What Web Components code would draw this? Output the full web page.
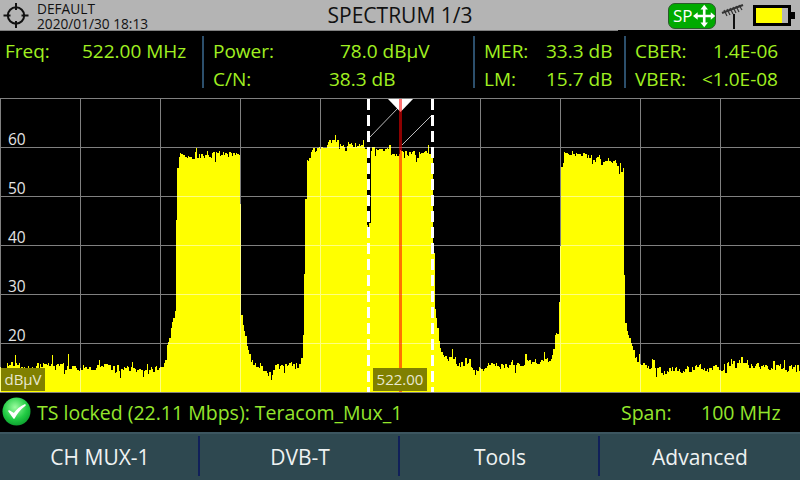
<!DOCTYPE html>
<html><head><meta charset="utf-8">
<style>
html,body{margin:0;padding:0;background:#000}
body{width:800px;height:480px;overflow:hidden;display:flex;flex-direction:column;font-family:"Open Sans","Noto Sans",sans-serif}
</style></head><body>
<top-bar title="SPECTRUM 1/3" profile="DEFAULT" stamp="2020/01/30 18:13"></top-bar>
<meas-panel>
  <meas-cell style="width:202px;padding-left:5px">
    <meas-row label="Freq:" value="522.00 MHz" at="77"></meas-row>
  </meas-cell>
  <meas-cell divider style="width:271px;padding-left:9px">
    <meas-row label="Power:" value="78.0 dBµV" at="127"></meas-row>
    <meas-row label="C/N:" value="38.3 dB" at="116"></meas-row>
  </meas-cell>
  <meas-cell divider style="width:151px;padding-left:9px">
    <meas-row label="MER:" value="33.3 dB" at="62"></meas-row>
    <meas-row label="LM:" value="15.7 dB" at="62"></meas-row>
  </meas-cell>
  <meas-cell divider style="width:164px;padding-left:9px">
    <meas-row label="CBER:" value="1.4E-06" at="78"></meas-row>
    <meas-row label="VBER:" value="&lt;1.0E-08" at="67"></meas-row>
  </meas-cell>
</meas-panel>
<spectrum-plot></spectrum-plot>
<status-bar span="100 MHz">TS locked (22.11 Mbps): Teracom_Mux_1</status-bar>
<soft-keys>
  <soft-key>CH MUX-1</soft-key>
  <soft-key>DVB-T</soft-key>
  <soft-key>Tools</soft-key>
  <soft-key last>Advanced</soft-key>
</soft-keys>
<script>
function def(name, css, html, init){
  customElements.define(name, class extends HTMLElement{
    connectedCallback(){
      if(this.shadowRoot) return;
      const r=this.attachShadow({mode:'open'});
      r.innerHTML='<style>'+css+'</style>'+(typeof html==='function'?html(this):html);
      if(init) init(r,this);
    }
  });
}
def('top-bar',`
:host{display:grid;grid-template-columns:1fr auto 1fr;align-items:center;height:30px;background:#b4b4b4;color:#111;
  border-bottom:1px solid;border-image:linear-gradient(90deg,#808080 0,#808080 617px,#000 617px,#000 100%) 1;flex:none}
.l{display:flex;align-items:center;gap:7px;padding-left:3px}
.t{font-size:13.7px;line-height:15px;white-space:nowrap;padding-top:1px}
h1{margin:0;font:400 21px/30px "Open Sans",sans-serif;color:#111;position:relative;top:-1px}
.r{display:flex;align-items:center;justify-content:flex-end;padding-right:4px}
.sp{width:48px;height:26px;box-sizing:border-box;border:1px solid #2a5a2a;border-radius:7px;background:#00aa00;color:#fff;font-size:17px;display:flex;align-items:center;padding-left:4px;gap:0;margin-right:5px;line-height:1}
svg{display:block}
`, h=>`
<div class="l">
<svg width="27" height="27" viewBox="0 0 27 27"><circle cx="13" cy="13.5" r="8.2" fill="none" stroke="#111" stroke-width="2"/><path d="M13 1v7M13 19v7M0.5 13.5h7M18.5 13.5h7" stroke="#111" stroke-width="2"/></svg>
<div class="t"><div>${h.getAttribute('profile')}</div><div>${h.getAttribute('stamp')}</div></div>
</div>
<h1>${h.getAttribute('title')}</h1>
<div class="r">
<div class="sp"><span>SP</span><svg width="24" height="24" viewBox="0 0 24 24"><path fill="#fff" d="M12 0l4 5h-2.6v5.6H19V8l5 4-5 4v-2.6h-5.6V19H16l-4 5-4-5h2.6v-5.6H5V16l-5-4 5-4v2.6h5.6V5H8z"/></svg></div>
<svg width="24" height="26" viewBox="0 0 24 26" style="margin-right:8px"><path d="M13 11v15" stroke="#111" stroke-width="2"/><path d="M1 10L22 2" stroke="#333" stroke-width="2"/><path d="M3 7l3 6M6 6l3 6M9 5l3 6M12 4l3 6M15 3l3 6M18 2l3 5" stroke="#333" stroke-width="1.2"/></svg>
<svg width="43" height="22" viewBox="0 0 43 22"><rect x="1.5" y="1.5" width="35" height="18" fill="#b4b4b4" stroke="#000" stroke-width="3"/><rect x="3" y="3" width="26" height="15" fill="#ff0"/><rect x="37" y="7" width="5" height="7" fill="#000"/></svg>
</div>`);
def('meas-panel',`:host{display:flex;height:67px;flex:none;background:#000;padding-top:5px;box-sizing:border-box}`,`<slot></slot>`);
def('meas-cell',`
:host{display:block;box-sizing:border-box;height:52px;border-left:2px solid transparent}
:host([divider]){border-left-color:#2c4f6c}
:host(:first-child){border-left:0}
`,`<slot></slot>`);
def('meas-row',`
:host{display:block;height:28px;line-height:28px;font-size:19px;color:#a0f020;white-space:nowrap;position:relative;top:1px}
span{display:inline-block}
`,h=>`<span style="width:${h.getAttribute('at')}px">${h.getAttribute('label')}</span><span>${h.getAttribute('value').replace(/</g,'&lt;')}</span>`);
def('spectrum-plot',`
:host{display:block;position:relative;height:295px;flex:none;background:#000;overflow:hidden}
svg{display:block;position:absolute;left:0;top:0}
.y{position:absolute;left:8px;font-size:15.5px;line-height:18px;color:#e4e4e4}
.box{position:absolute;background:#808000;color:#e8e8d0;font-size:15px;line-height:23px;height:23px;text-align:center}
`,`
<svg id="s" width="800" height="295" viewBox="0 98 800 295"></svg>
<span class="y" style="top:32px">60</span>
<span class="y" style="top:81px">50</span>
<span class="y" style="top:130px">40</span>
<span class="y" style="top:179px">30</span>
<span class="y" style="top:228px">20</span>
<span class="box" style="left:1px;top:270px;width:44px">dBµV</span>
<span class="box" style="left:373px;top:270px;width:54px">522.00</span>
`,r=>{
  const env=[[0,365],[20,366],[60,367],[100,368],[160,369],[163,367],[165,360],[167,345],[170,335],[172,322],[174.5,312],[175.5,312],[176,220],[177.2,158],[180,154],[238.5,154],[239.5,154],[240,204],[240.6,312],[243,325],[246,342],[248,350],[250,358],[255,365],[265,371],[270,374],[275,367],[295,366],[300.5,365],[302,345],[303.5,330],[304.3,240],[305.5,170],[307,160],[312,153],[330,142],[364,146],[366,146],[367,225],[369.4,225],[370,150],[432,156],[432.8,205],[433.2,302],[435,308],[437,328],[440,348],[445,356],[460,364],[480,368],[500,365],[545,363],[551,360],[553,350],[555,335],[558,333],[559.6,284],[560.8,170],[562,156],[570,151],[585,156],[605,160],[622.5,164],[623.2,170],[624,275],[625,323],[628,335],[632,346],[635,358],[640,365],[660,372],[680,370],[720,367],[740,364],[800,369]];
  function at(x){for(let i=1;i<env.length;i++){if(x<=env[i][0]){const a=env[i-1],b=env[i];const t=(x-a[0])/(b[0]-a[0]||1);return [a[1]+(b[1]-a[1])*t,Math.abs(b[1]-a[1])/(b[0]-a[0]||1)];}}return [369,0];}
  let seed=0x51a7;
  const rnd=()=>{seed|=0;seed=seed+0x6D2B79F5|0;let t=Math.imul(seed^seed>>>15,1|seed);t=t+Math.imul(t^t>>>7,61|t)^t;return ((t^t>>>14)>>>0)/4294967296;};
  let d='M0 392';
  let prev=0;
  for(let i=0;i<=600;i++){
    const x0=Math.round(i*4/3),x1=Math.round((i+1)*4/3);
    const [e,sl]=at(x0);
    let n=(rnd()-.5)*11*.65+prev*.35;
    prev=n;
    if(rnd()<.06) n-=5+rnd()*6; else if(rnd()<.06) n+=6;
    if(sl>2.5) n*=.1;
    const y=Math.round(e+n);
    d+=`V${y}H${x1}`;
  }
  d+='V392Z';
  let g='';
  for(let x=0;x<800;x+=80) if(x!==400) g+=`M${x+.5} 98V392`;
  for(let y=98;y<=392;y+=49) g+=`M0 ${y+.5}H800`;
  r.getElementById('s').innerHTML=`
  <path d="${d}" fill="#ff0" shape-rendering="crispEdges"/>
  <path d="${g}" stroke="#fff" stroke-opacity=".5" stroke-width="1" fill="none" shape-rendering="crispEdges"/>
  <path d="M370 137L398 108M402 145L431 116" stroke="#bbb" stroke-width="1" fill="none"/>
  <path d="M388 99H413L400.5 112Z" fill="#fff"/>
  <rect x="399" y="99" width="3" height="293" fill="#f00" fill-opacity=".55" shape-rendering="crispEdges"/>
  <path d="M368.5 99V392M432.5 99V392" stroke="#fff" stroke-width="3" stroke-dasharray="11 5" fill="none" shape-rendering="crispEdges"/>`;
});
def('status-bar',`
:host{display:flex;align-items:center;height:39px;flex:none;background:#000;color:#94e62c;font-size:19.5px;white-space:nowrap;position:relative}
svg{margin:0 6px 0 2px;flex:none;position:relative;top:-1px}
.m{flex:1}
.a{width:80px}
.b{width:99px;flex:none}
`,h=>`
<svg width="29" height="29" viewBox="0 0 29 29"><defs><radialGradient id="g" cx=".45" cy=".35" r=".7"><stop offset="0" stop-color="#9dfca0"/><stop offset=".6" stop-color="#22cc44"/><stop offset="1" stop-color="#0a9a2c"/></radialGradient></defs><circle cx="14.5" cy="14.5" r="14" fill="url(#g)"/><path d="M7 14l5 7c3-6 7-10 11-13-5 2-8 5-11 9z" fill="#fff" stroke="#fff" stroke-width="1.6" stroke-linejoin="round"/></svg>
<span class="m"><slot></slot></span><span class="a">Span:</span><span class="b">${h.getAttribute('span')}</span>`);
def('soft-keys',`:host{display:flex;height:48px;flex:none;background:#2e4850;border-top:2px solid #3c5660;box-sizing:border-box}`,`<slot></slot>`);
def('soft-key',`
:host{flex:1 1 0;display:flex;align-items:center;justify-content:center;color:#eef2f2;font-size:21px;position:relative;height:46px;box-sizing:border-box}
:host(:not([last]))::after{content:"";position:absolute;right:0;top:2px;height:40px;width:2px;background:#10205a}
`,`<slot></slot>`);
</script>
</body></html>
